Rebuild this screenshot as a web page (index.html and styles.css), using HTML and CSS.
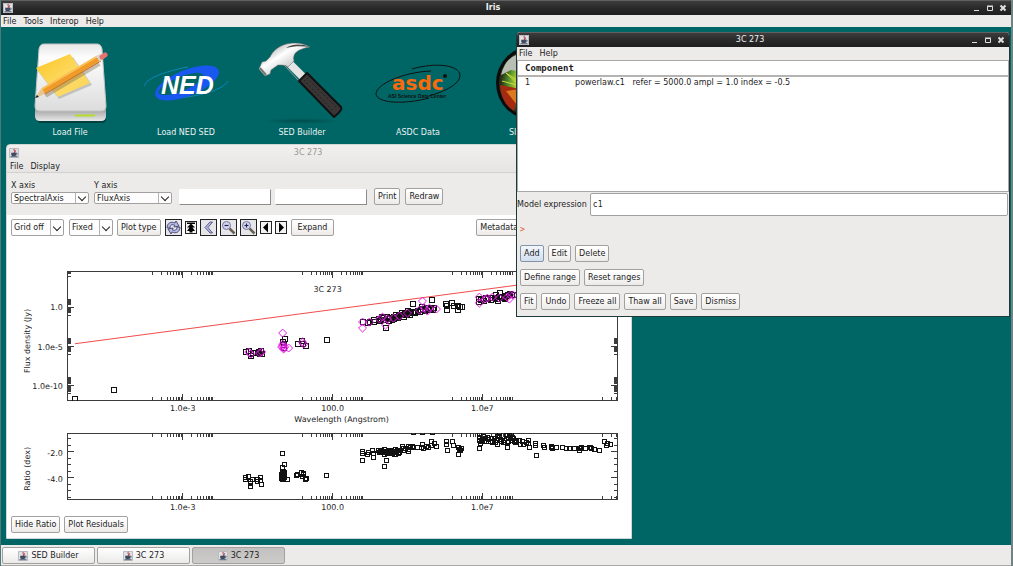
FILE: index.html
```html
<!DOCTYPE html>
<html lang="en">
<head>
<meta charset="UTF-8">
<meta name="viewport" content="width=device-width, initial-scale=1.0">
<title>Iris</title>
<link rel="stylesheet" href="styles.css">
</head>
<body>

<!-- Shared icons -->
<svg class="sprite" aria-hidden="true">
  <symbol id="java" viewBox="0 0 10 10">
    <rect width="10" height="10" fill="#dfe1e5"/>
    <path d="M.5 9.500V.5h9v9z" fill="none" stroke="#b9bcc3"/>
    <path d="M5.600 .8C3.600 2.400 6.800 3 5 5M6.900 2.200C5.400 3.200 6.900 3.800 5.800 4.800" fill="none" stroke="#b5393c"/>
    <path d="M2.200 4.800h5v1.600c0 .9-.7 1.500-1.500 1.500H3.700c-.8 0-1.500-.6-1.500-1.500z" fill="#3d4c62"/>
    <path d="M7 5.200c2-.4 1.800 1.600-.2 1.800M1.500 8.600h7" fill="none" stroke="#3d4c62" stroke-width=".8"/>
  </symbol>
</svg>

<div class="app">
  <header class="titlebar titlebar-dark">
    <svg class="java"><use href="#java"/></svg>
    <h1>Iris</h1>
    <div class="win-buttons">
      <button type="button" aria-label="Minimize"><svg viewBox="0 0 8 8"><path d="M1 6.500h5"/></svg></button>
      <button type="button" aria-label="Maximize"><svg viewBox="0 0 8 8"><path d="M1.500 2.500h5v4h-5zM1 2h6"/></svg></button>
      <button type="button" aria-label="Close"><svg viewBox="0 0 8 8"><path class="cross" d="M1.500 1.500l5 5M6.500 1.500l-5 5"/></svg></button>
    </div>
  </header>
  <nav class="menubar">
    <a href="#">File</a><a href="#">Tools</a><a href="#">Interop</a><a href="#">Help</a>
  </nav>

  <main class="desktop">
    <div class="launchers">
      <a class="launcher" href="#">
        <svg viewBox="12 36 116 90">
          <defs>
            <linearGradient id="drive" x1="0" y1="0" x2="0" y2="1"><stop offset="0" stop-color="#e6e6e6"/><stop offset=".2" stop-color="#fdfdfd"/><stop offset="1" stop-color="#dcdcdc"/></linearGradient>
            <linearGradient id="note" x1="0" y1="0" x2="1" y2="1"><stop offset="0" stop-color="#fbc61f"/><stop offset=".6" stop-color="#fddb6a"/><stop offset="1" stop-color="#f9d24c"/></linearGradient>
            <linearGradient id="base" x1="0" y1="0" x2="0" y2="1"><stop offset="0" stop-color="#8f8f8f"/><stop offset=".5" stop-color="#bdbdbd"/><stop offset="1" stop-color="#e8e8e8"/></linearGradient>
          </defs>
          <rect x="37" y="114" width="69" height="8" rx="4" fill="#00403f"/>
          <path d="M35 106h71v9q0 5-5 5H40q-5 0-5-5z" fill="url(#base)"/>
          <path d="M44 43h53q4 0 5 5l4 57q0 5-5 5H40q-5 0-5-5l4-57q1-5 5-5z" fill="url(#drive)" stroke="#c4c4c4"/>
          <path d="M75 114.500h20" stroke="#b4dc28" stroke-width="2"/>
          <path d="M37 69l36-13 19 28-33 14z" fill="#9a9a9a" opacity=".5"/>
          <path d="M36 67l34-14 20 29-32 14z" fill="url(#note)"/>
          <path d="M45 94L99 62" stroke="#7a6a4a" stroke-width="6" opacity=".4"/>
          <path d="M43 90L99 57" stroke="#f09a28" stroke-width="6"/>
          <path d="M42 88L98 55" stroke="#fcc25a" stroke-width="2"/>
          <path d="M45 93L101 60" stroke="#d36a1e" stroke-width="1"/>
          <path d="M41 88l4 5-10 4z" fill="#e7c590"/><path d="M37 94l2 2-4 1z" fill="#222"/>
          <path d="M98 58l4-3" stroke="#d9d9d9" stroke-width="6"/>
          <path d="M102 56l3-2" stroke="#e5726c" stroke-width="5" stroke-linecap="round"/>
        </svg>
        <span>Load File</span>
      </a>
      <a class="launcher" href="#">
        <svg viewBox="128 36 116 90">
          <path d="M145 85C143 79 165 70 188 66M228 80C224 88 202 95 178 97" fill="none" stroke="#0e86b8"/>
          <ellipse cx="187" cy="82" rx="34" ry="13" transform="rotate(-22 187 82)" fill="#1857f0"/>
          <ellipse cx="181" cy="83" rx="24" ry="7" transform="rotate(-22 181 83)" fill="#006665"/>
          <text class="logo-ned" x="161" y="93">NED</text>
        </svg>
        <span>Load NED SED</span>
      </a>
      <a class="launcher" href="#">
        <svg viewBox="245 36 116 90">
          <defs>
            <linearGradient id="steel" x1="0" y1="0" x2="1" y2="1"><stop offset="0" stop-color="#777"/><stop offset=".4" stop-color="#fff"/><stop offset="1" stop-color="#8a8a8a"/></linearGradient>
            <radialGradient id="shade"><stop offset="0" stop-color="#003c3c"/><stop offset="1" stop-color="#003c3c" stop-opacity="0"/></radialGradient>
          </defs>
          <ellipse cx="303" cy="120" rx="39" ry="3" fill="url(#shade)" opacity=".6"/>
          <path d="M288 60l17 17" stroke="#e4e4e4" stroke-width="8"/>
          <path d="M285 64l15 16" stroke="#999" stroke-width="1"/>
          <path d="M311 46c-9-5-21-5-29-1-6 3-9 7-11 11l-4 4-4 1-3 7 6 7 5-2 1-4 7-5c4 0 8 0 10 2l6-6c-2-8 4-12 16-14z" fill="url(#steel)" stroke="#666" stroke-width=".5"/>
          <path d="M311 46c-9-4-19-3-24 1 8-2 16-2 24-1z" fill="#4b4545"/>
          <path d="M261 67l6 7" stroke="#777" stroke-width="2"/>
          <path d="M300 80l8-8 34 34q2 3-7 10z" fill="#3a3535" stroke="#111" stroke-width="2" stroke-linejoin="round"/>
          <path d="M305 79l29 31M308 77l30 30" stroke="#161212" stroke-width="1" stroke-dasharray="1 3"/>
        </svg>
        <span>SED Builder</span>
      </a>
      <a class="launcher" href="#">
        <svg viewBox="360 36 116 90">
          <path d="M412 68c24-7 47-4 48 6 0 9-14 16-31 21" fill="none" stroke="#111"/>
          <path d="M431 70c-27 1-55 13-55 23 1 9 27 11 53 4" fill="none" stroke="#111"/>
          <text class="logo-asdc" x="392" y="89">asdc</text>
          <circle cx="445" cy="75" r="2" fill="#111"/>
          <text class="logo-sub" x="388" y="97">ASI Science Data Center</text>
        </svg>
        <span>ASDC Data</span>
      </a>
      <a class="launcher" href="#">
        <svg viewBox="476 36 116 90">
          <defs><radialGradient id="eye"><stop offset="0" stop-color="#111"/><stop offset=".35" stop-color="#1c2a0c"/><stop offset=".42" stop-color="#dfe03a"/><stop offset=".7" stop-color="#5b9a2c"/><stop offset=".95" stop-color="#28301a"/></radialGradient></defs>
          <circle cx="533" cy="82" r="37" fill="#0b0b0b"/>
          <circle cx="533" cy="82" r="34" fill="url(#eye)"/>
          <path d="M501 74q4-16 15-20v16l-5-1z" fill="#b9beb4"/>
          <path d="M500 84l20 4-6 22q-13-8-14-26z" fill="#a52a12"/>
          <path d="M506 90l14-2-3 16z" fill="#dc7a20"/>
          <path d="M502 80l18 5-14-13 14 9" fill="none" stroke="#c5dd3c"/>
        </svg>
        <span class="label-start">SI</span>
      </a>
    </div>

    <!-- Plot window -->
    <section class="window plot-window">
      <header class="titlebar titlebar-idle">
        <svg class="java"><use href="#java"/></svg>
        <h2>3C 273</h2>
      </header>
      <nav class="menubar"><a href="#">File</a><a href="#">Display</a></nav>
      <form class="axis-panel">
        <div class="axis-field">
          <label for="xAxis">X axis</label>
          <div class="combo combo-small"><select id="xAxis"><option>SpectralAxis</option></select></div>
        </div>
        <div class="axis-field">
          <label for="yAxis">Y axis</label>
          <div class="combo combo-small"><select id="yAxis"><option>FluxAxis</option></select></div>
        </div>
        <div class="ranges">
          <input type="text" aria-label="Range minimum">
          <input type="text" aria-label="Range maximum">
        </div>
        <button class="btn" type="button">Print</button>
        <button class="btn" type="button">Redraw</button>
      </form>
      <div class="toolbar">
        <div class="combo grid-combo"><select aria-label="Grid"><option>Grid off</option></select></div>
        <div class="combo fixed-combo"><select aria-label="Scale"><option>Fixed</option></select></div>
        <button class="btn" type="button">Plot type</button>
        <div class="tools">
          <button class="tool" type="button" aria-label="Reset"><svg viewBox="0 0 15 15"><path d="M1 8c0-5 4-7 8-5l1-2 3 5-5 1 .5-2C6 4 4 5 4 8zM14 7c0 5-4 7-8 5l-1 2-3-5 5-1-.5 2c2.500 1 4.500 0 4.500-3z" fill="#b4b8e6" stroke="#33335e" stroke-width=".8"/></svg></button>
          <button class="tool tool-small" type="button" aria-label="Full range"><svg viewBox="0 0 10 10"><path d="M1 0h8v1.500H1zM5 1l4 4H6.500L9 8.500H6.500V10h-3V8.500H1L3.500 5H1z" fill="#000"/></svg></button>
          <button class="tool" type="button" aria-label="Back"><svg viewBox="0 0 15 15"><path d="M9 2h2.500L7 7.500l4.500 5.500H9L4 7.500z" fill="#b4b8e6" stroke="#44446e" stroke-width=".8"/></svg></button>
          <button class="tool" type="button" aria-label="Zoom out"><svg viewBox="0 0 15 15"><path d="M8.500 8.500l5 5" stroke="#6b6152" stroke-width="2.500"/><circle cx="5.500" cy="5.500" r="4" fill="#d3d5f0" stroke="#77779c"/><path d="M3.500 5.500h4" stroke="#222255" stroke-width="1.200"/></svg></button>
          <button class="tool" type="button" aria-label="Zoom in"><svg viewBox="0 0 15 15"><path d="M8.500 8.500l5 5" stroke="#6b6152" stroke-width="2.500"/><circle cx="5.500" cy="5.500" r="4" fill="#d3d5f0" stroke="#77779c"/><path d="M3.500 5.500h4M5.500 3.500v4" stroke="#222255" stroke-width="1.200"/></svg></button>
          <button class="tool tool-small" type="button" aria-label="Pan left"><svg viewBox="0 0 10 10"><path d="M7 0v10L2 5z" fill="#000"/></svg></button>
          <button class="tool tool-small" type="button" aria-label="Pan right"><svg viewBox="0 0 10 10"><path d="M3 0v10l5-5z" fill="#000"/></svg></button>
        </div>
        <button class="btn btn-wide" type="button">Expand</button>
        <button class="btn metadata" type="button">Metadata</button>
      </div>
      <svg class="plots" id="plots" viewBox="7 246 625 262">
        <defs>
          <clipPath id="fluxClip"><rect x="67" y="271" width="552" height="130"/></clipPath>
          <clipPath id="ratioClip"><rect x="67" y="433" width="552" height="67"/></clipPath>
        </defs>
        <g class="frame" id="frames"></g>
        <g clip-path="url(#fluxClip)">
          <path class="model" d="M75 343.700L619 271.600"/>
          <g class="squares" id="fluxSquares"></g>
          <g class="diamonds" id="fluxDiamonds"></g>
        </g>
        <g clip-path="url(#ratioClip)" class="squares" id="ratioSquares"></g>
        <text x="328" y="292" text-anchor="middle">3C 273</text>
        <text x="342" y="422" text-anchor="middle">Wavelength (Angstrom)</text>
        <text transform="translate(30 341) rotate(-90)" text-anchor="middle">Flux density (Jy)</text>
        <text transform="translate(30 469) rotate(-90)" text-anchor="middle">Ratio (dex)</text>
        <g id="tickLabels"></g>
      </svg>
      <footer class="plot-actions">
        <button class="btn" type="button">Hide Ratio</button>
        <button class="btn" type="button">Plot Residuals</button>
      </footer>
    </section>

    <!-- Fitting window -->
    <section class="window fit-window">
      <header class="titlebar titlebar-dark">
        <svg class="java"><use href="#java"/></svg>
        <h2>3C 273</h2>
        <div class="win-buttons">
          <button type="button" aria-label="Minimize"><svg viewBox="0 0 8 8"><path d="M1 6.500h5"/></svg></button>
          <button type="button" aria-label="Maximize"><svg viewBox="0 0 8 8"><path d="M1.500 2.500h5v4h-5zM1 2h6"/></svg></button>
          <button type="button" aria-label="Close"><svg viewBox="0 0 8 8"><path class="cross" d="M1.500 1.500l5 5M6.500 1.500l-5 5"/></svg></button>
        </div>
      </header>
      <nav class="menubar"><a href="#">File</a><a href="#">Help</a></nav>
      <div class="components">
        <table>
          <thead><tr><th colspan="2">Component</th></tr></thead>
          <tbody><tr><td class="num">1</td><td>powerlaw.c1&nbsp;&nbsp; refer = 5000.0 ampl = 1.0 index = -0.5</td></tr></tbody>
        </table>
      </div>
      <div class="expression">
        <label for="expr">Model expression</label>
        <input type="text" id="expr" value="c1">
      </div>
      <p class="prompt">&gt;</p>
      <div class="fit-actions">
        <div class="row">
          <button class="btn focused" type="button">Add</button>
          <button class="btn" type="button">Edit</button>
          <button class="btn" type="button">Delete</button>
        </div>
        <div class="row">
          <button class="btn" type="button">Define range</button>
          <button class="btn" type="button">Reset ranges</button>
        </div>
        <div class="row">
          <button class="btn" type="button">Fit</button>
          <button class="btn" type="button">Undo</button>
          <button class="btn" type="button">Freeze all</button>
          <button class="btn" type="button">Thaw all</button>
          <button class="btn" type="button">Save</button>
          <button class="btn" type="button">Dismiss</button>
        </div>
      </div>
    </section>
  </main>

  <footer class="taskbar">
    <button type="button"><svg class="java"><use href="#java"/></svg>SED Builder</button>
    <button type="button"><svg class="java"><use href="#java"/></svg>3C 273</button>
    <button type="button" class="active"><svg class="java"><use href="#java"/></svg>3C 273</button>
  </footer>
</div>

<script src="plot.js"></script>
</body>
</html>
```
FILE: styles.css
```css
* {
  box-sizing: border-box;
}

body {
  margin: 0;
  font-family: 'DejaVu Sans', sans-serif;
  font-size: 8px;
  line-height: 12px;
  color: #1c1c1c;
}

h1, h2, p {
  margin: 0;
}

a {
  color: inherit;
  text-decoration: none;
}

button, input, select {
  font: inherit;
  color: inherit;
  margin: 0;
}

.sprite {
  position: absolute;
  width: 0;
  height: 0;
}

.app {
  display: flex;
  flex-direction: column;
  height: 100vh;
  border-right: 2px solid #6f8383;
  border-left: 1px solid #4d7a7a;
  background-color: #ecebea;
}

/* Title bars */
.titlebar {
  display: flex;
  align-items: center;
  flex: none;
  height: 15px;
  padding: 0 4px 0 2px;
}

.titlebar h1,
.titlebar h2 {
  flex: 1;
  font-size: 8px;
  font-weight: bold;
  text-align: center;
}

.titlebar-dark {
  color: #f0f0f0;
  background: linear-gradient(#3c3c3c, #2a2a2a 50%, #1e1e1e);
  border-top: 1px solid #606060;
}

.titlebar-dark h2 {
  font-weight: normal;
}

.titlebar-idle {
  height: 16px;
  padding-right: 34px;
  color: #9a9896;
}

.titlebar-idle h2 {
  font-weight: normal;
}

.java {
  width: 10px;
  height: 10px;
  flex: none;
}

.win-buttons {
  display: flex;
  gap: 5px;
}

.win-buttons button {
  display: flex;
  padding: 0;
  border: none;
  background: none;
}

.win-buttons svg {
  width: 8px;
  height: 8px;
  fill: none;
  stroke: #e0e0e0;
}

.win-buttons .cross {
  stroke-width: 2;
}

.menubar {
  display: flex;
  flex: none;
  gap: 7px;
  height: 12px;
  padding-left: 2px;
  background-color: #ecebea;
  line-height: 14px;
}

.desktop {
  position: relative;
  flex: 1;
  min-height: 0;
  overflow: hidden;
  background-color: #006665;
}

/* Launch icons */
.launchers {
  display: flex;
  padding: 10px 0 0 11px;
}

.launcher {
  display: flex;
  flex-direction: column;
  flex: none;
  width: 116px;
  color: #e8f2f2;
  text-align: center;
}

.launcher svg {
  height: 90px;
}

.label-start {
  padding-left: 33px;
  text-align: left;
}

.logo-ned {
  font: italic bold 25px 'Liberation Sans', sans-serif;
  fill: #fff;
}

.logo-asdc {
  font: bold 20px 'DejaVu Sans', sans-serif;
  fill: #f96a0c;
}

.logo-sub {
  font: bold 5px 'Liberation Sans', sans-serif;
  fill: #111;
}

/* Windows */
.window {
  position: absolute;
  display: flex;
  flex-direction: column;
  background-color: #ecebea;
}

.plot-window {
  top: 117px;
  left: 5px;
  bottom: 6px;
  width: 62%;
  border: 1px solid #cfd8d7;
  border-radius: 4px 4px 0 0;
  background: linear-gradient(#f1f0ef, #e6e5e4 27px, #ecebea 28px);
}

.plot-window .menubar {
  padding-left: 3px;
  background: none;
  border-bottom: 1px solid #d2d1cf;
  line-height: 12px;
}

.axis-panel {
  display: flex;
  align-items: flex-end;
  gap: 5px;
  padding: 7px 4px 10px;
}

.axis-field {
  width: 78px;
  padding-bottom: 1px;
}

.axis-field label {
  display: block;
}

.ranges {
  display: flex;
  gap: 4px;
  margin: 0 2px;
}

.ranges input {
  width: 92px;
  height: 16px;
  padding: 0 2px;
  border: 1px solid #fff;
  border-right-color: #8c8c8c;
  border-bottom-color: #8c8c8c;
  background-color: #fff;
}

.combo {
  position: relative;
  height: 17px;
  flex: none;
}

.combo select {
  display: block;
  width: 100%;
  height: 100%;
  padding: 0 0 0 2px;
  appearance: none;
  border: 1px solid #a3a19f;
  border-radius: 2px;
  background: #fdfdfd;
}

.combo::before {
  content: '';
  position: absolute;
  top: 1px;
  right: 13px;
  bottom: 1px;
  border-left: 1px solid #b5b3b1;
}

.combo::after {
  content: '';
  position: absolute;
  top: 50%;
  right: 4px;
  width: 5px;
  height: 5px;
  margin-top: -4px;
  border: solid #222;
  border-width: 0 1px 1px 0;
  transform: rotate(45deg);
}

.combo-small {
  height: 12px;
}

.grid-combo {
  width: 53px;
}

.fixed-combo {
  width: 44px;
  margin-left: 1px;
}

.btn {
  flex: none;
  height: 17px;
  padding: 0 3px;
  border: 1px solid #a3a19f;
  border-radius: 2px;
  background: linear-gradient(#fff, #f6f5f4 60%, #ebeae9);
  white-space: nowrap;
}

.btn-wide {
  padding: 0 6px;
}

.btn.focused {
  border-color: #8493a8;
  background: linear-gradient(#f2f6fb, #d3dfee);
}

.toolbar {
  display: flex;
  align-items: center;
  gap: 4px;
  padding: 4px 4px 5px;
  background-color: #fff;
}

.tools {
  display: flex;
  align-items: center;
  gap: 3px;
}

.tool {
  width: 17px;
  height: 17px;
  flex: none;
  padding: 0;
  border: 1px solid #222;
  background-color: #e6e6ea;
}

.tool svg {
  display: block;
  width: 15px;
  height: 15px;
}

.tool-small {
  width: 12px;
  height: 13px;
  background-color: #f4f4f4;
}

.tool-small svg {
  width: 10px;
  height: 11px;
}

.metadata {
  margin-left: auto;
  margin-right: 105px;
}

/* Plots */
.plots {
  flex: 1;
  min-height: 0;
  width: 100%;
  background-color: #fff;
}

.plots text {
  font-size: 8px;
  fill: #1c1c1c;
}

.frame,
.squares {
  fill: none;
  stroke: #111;
  shape-rendering: crispEdges;
}

.frame {
  stroke: #3c3c3c;
}

.diamonds {
  fill: none;
  stroke: #e21ce2;
}

.model {
  stroke: #f04a4a;
}

.plot-actions {
  display: flex;
  gap: 4px;
  padding: 3px 4px 5px;
  background-color: #fff;
}

/* Fitting window */
.fit-window {
  top: 5px;
  left: 51%;
  right: 1px;
  border: 1px solid #1d3a3a;
  border-top: none;
  border-radius: 4px 4px 0 0;
  overflow: hidden;
}

.fit-window .menubar {
  height: 13px;
}

.components {
  height: 132px;
  border: 1px solid #a9a8a6;
  background-color: #fff;
}

.components table {
  width: 100%;
  border-collapse: separate;
  border-spacing: 0;
}

.components th {
  height: 16px;
  padding: 0 7px;
  border-bottom: 2px solid #b5b4b2;
  font: bold 9px/13px 'DejaVu Sans Mono', monospace;
  text-align: left;
}

.components td {
  height: 12px;
  padding: 0;
}

.components .num {
  width: 57px;
  padding-left: 7px;
}

.expression {
  display: flex;
  align-items: center;
  gap: 3px;
  padding: 1px 1px 1px 0;
}

.expression label {
  flex: none;
}

.expression input {
  flex: 1;
  min-width: 0;
  height: 23px;
  padding: 0 2px;
  border: 1px solid #a3a19f;
  border-radius: 2px;
  background-color: #fff;
  font-family: 'DejaVu Sans Mono', monospace;
}

.prompt {
  padding: 7px 3px 9px;
  color: #d8582c;
  font-family: 'DejaVu Sans Mono', monospace;
}

.fit-actions {
  display: flex;
  flex-direction: column;
  gap: 7px;
  padding: 0 3px 6px;
}

.row {
  display: flex;
  gap: 4px;
}

/* Task bar */
.taskbar {
  display: flex;
  flex: none;
  gap: 2px;
  height: 21px;
  padding: 2px 1px 1px;
  border-bottom: 1px solid #aaa9a7;
}

.taskbar button {
  display: flex;
  align-items: center;
  justify-content: center;
  gap: 3px;
  width: 93px;
  padding: 0;
  border: 1px solid #a3a19f;
  border-radius: 2px;
  background: linear-gradient(#fff, #ebeae9);
}

.taskbar .active {
  background: linear-gradient(#c3c1bf, #cdcbc9);
}
```
FILE: plot.js
```js
const fluxSquares = [
  [75,399],[114,390],[246,352],[249,351],[251,354],[251,356],[253,353],[258,353],[259,352],[261,351],[262,354],[260,354],
  [285,339],[283,342],[284,345],[284,348],[298,344],[302,341],[303,344],[306,346],[327,340],
  [363,322],[368,323],[370,322],[374,320],[374,322],[379,319],[381,320],[383,318],[385,320],[386,328],[388,319],
  [380,321],[382,317],[387,317],[389,321],[393,320],[395,319],[397,315],[399,318],[403,313],[405,317],[409,311],[411,315],
  [390,318],[392,318],[394,317],[396,318],[398,317],[400,316],[402,315],[404,315],[406,314],[408,314],[410,313],
  [412,312],[414,304],[415,312],[417,312],[419,311],[422,310],[424,309],[427,310],[429,308],[432,309],[433,300],[435,308],
  [416,313],[421,312],[423,307],[426,311],[430,310],[434,310],
  [447,304],[448,306],[448,310],[453,303],[455,306],[459,306],[461,307],[463,307],[459,310],
  [480,299],[482,300],[484,299],[487,298],[489,299],[493,298],[496,298],[498,299],[500,297],[501,293],[503,297],
  [480,302],[485,301],[492,300],[497,295],[499,301],[506,299],
  [505,298],[507,296],[509,295],[511,294],[513,295],[515,295]
];

const fluxDiamonds = [
  [283,333],[283,344],[283,346],[284,348],[285,347],[289,348],[284,349],[282,347],[303,342],[304,344],[249,352],[251,354],[262,352],[260,353],
  [363,322],[363,328],[370,322],[380,319],[383,317],[386,325],[388,319],[394,318],[400,316],[408,313],[423,301],[420,310],[425,308],
  [430,308],[437,309],[428,311],[480,303],[480,297],[486,299],[488,298],[493,297],[500,298],[508,297],[510,299],[511,295],[514,295]
];

const ratioSquares = [
  [246,478],[246,480],[249,477],[251,482],[251,484],[251,487],[253,480],[258,480],[258,482],[261,478],[261,481],[262,485],
  [283,454],[285,465],[283,468],[284,472],[283,473],[284,474],[283,476],[285,476],[283,478],[284,479],[283,480],[288,480],
  [282,475],[284,477],[285,473],[282,479],[285,478],
  [297,476],[298,475],[302,473],[304,474],[303,477],[304,475],[306,480],[307,479],[327,476],
  [363,452],[363,454],[363,461],[368,455],[369,453],[373,451],[374,454],[374,458],[379,451],[381,452],[382,451],[384,452],
  [385,467],[385,450],[386,453],[387,461],[387,452],[388,454],[390,453],[391,451],[393,454],[395,455],[396,450],[397,453],
  [380,453],[383,453],[385,455],[389,451],[392,452],[394,452],[396,455],[398,451],[399,454],[404,449],[409,452],[413,447],
  [399,451],[400,453],[401,451],[403,447],[404,451],[406,449],[409,447],[409,450],[411,448],[414,448],[418,448],
  [414,433],[423,433],[433,433],[422,448],[423,445],[424,449],[427,447],[429,448],[432,442],[432,446],[435,444],[437,447],
  [447,442],[447,445],[448,451],[453,442],[454,446],[459,448],[460,450],[461,451],[459,455],[462,449],
  [480,435],[480,438],[480,441],[481,444],[480,449],[483,440],[484,437],[486,439],[487,442],[489,440],[492,439],[493,443],
  [482,442],[485,442],[488,438],[491,442],[496,443],[498,441],[500,437],[504,443],[507,436],[509,442],[513,438],[516,443],
  [495,439],[497,441],[498,437],[498,445],[500,434],[501,440],[502,442],[505,441],[507,439],[508,443],[508,448],[510,436],
  [511,439],[512,441],[512,434],[514,439],[515,442],[517,441],[520,441],[521,445],[523,442],[524,445],[527,443],[529,441],
  [529,444],[530,448],[536,444],[536,446],[537,456],[544,446],[545,448],[552,447],[553,449],[552,448],[557,448],[563,448],[567,449],
  [570,449],[575,449],[580,451],[581,449],[582,448],[580,449],[586,449],[590,448],[592,449],[591,448],[595,450],[600,451],[605,442],[607,446],
  [608,444],[611,445]
];

function squares(id, points, r) {
  document.getElementById(id).innerHTML = points.map(([x, y]) =>
    `<rect x="${x - r + 0.5}" y="${y - r + 0.5}" width="${2 * r - 1}" height="${2 * r - 1}"/>`
  ).join('');
}

function diamonds(id, points, r) {
  document.getElementById(id).innerHTML = points.map(([x, y]) =>
    `<path d="M${x - r} ${y}l${r} ${-r} ${r} ${r} ${-r} ${r}z"/>`
  ).join('');
}

// Minor ticks fill the two decades around a major tick
function logTicks(major, decade) {
  const ticks = [];
  for (const start of [major - decade, major]) {
    for (let m = 1; m <= 10; m++) {
      ticks.push(start + decade * Math.log10(m));
    }
  }
  return ticks;
}

const left = 67, right = 619;
let path = '';

function xTick(x, top, bottom, len) {
  if (x < left || x > right) return;
  path += `M${x} ${top}v${len}M${x} ${bottom}v${-len}`;
}

function yTick(y, top, bottom, len) {
  if (y < top || y > bottom) return;
  path += `M${left} ${y}h${len}M${right} ${y}h${-len}`;
}

for (const [top, bottom] of [[271, 401], [433, 500]]) {
  path += `M${left}.5 ${top}.5H${right - 0.5}V${bottom - 0.5}H${left}.5z`;
  for (const x of [183, 333, 483, 633]) {
    xTick(x, top, bottom, 7);
    logTicks(x, 30).forEach(t => xTick(t, top, bottom, 4));
  }
}

for (const y of [268, 307, 346, 386]) {
  yTick(y, 271, 401, 7);
  // linear y runs downwards, so mirror the decade
  logTicks(y, 8).forEach(t => yTick(2 * y - t, 271, 401, 4));
}

for (let i = 0; i < 10; i++) {
  yTick(439 + i * 6.5, 433, 500, i === 2 || i === 6 ? 7 : 4);
}

document.getElementById('frames').innerHTML = `<path d="${path}"/>`;

squares('fluxSquares', fluxSquares, 3);
diamonds('fluxDiamonds', fluxDiamonds, 4);
squares('ratioSquares', ratioSquares, 2.5);

const labels = [];
for (const y of [411, 510]) {
  labels.push([183, y, 'middle', '1.0e-3'], [333, y, 'middle', '100.0'], [483, y, 'middle', '1.0e7']);
}
labels.push([63, 310, 'end', '1.0'], [63, 350, 'end', '1.0e-5'], [63, 389, 'end', '1.0e-10']);
labels.push([63, 456, 'end', '-2.0'], [63, 482, 'end', '-4.0']);
document.getElementById('tickLabels').innerHTML = labels.map(([x, y, anchor, text]) =>
  `<text x="${x}" y="${y}" text-anchor="${anchor}">${text}</text>`
).join('');
```
